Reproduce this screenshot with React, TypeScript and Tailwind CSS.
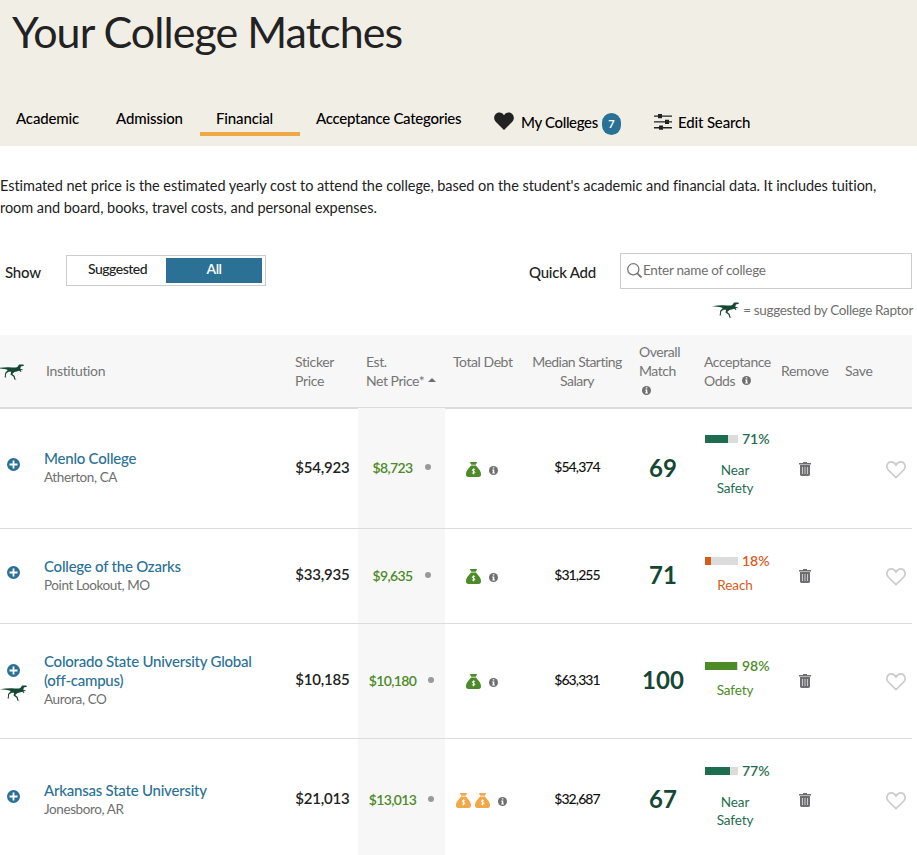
import type { ReactNode } from 'react';

type Tone = 'near' | 'reach' | 'safety';

interface College {
  name: string[];
  place: string;
  suggested: boolean;
  sticker: string;
  net: string;
  bags: number;
  salary: string;
  match: number;
  odds: number;
  label: string[];
  tone: Tone;
  height: string;
}

const colleges: College[] = [
  {
    name: ['Menlo College'],
    place: 'Atherton, CA',
    suggested: false,
    sticker: '$54,923',
    net: '$8,723',
    bags: 1,
    salary: '$54,374',
    match: 69,
    odds: 71,
    label: ['Near', 'Safety'],
    tone: 'near',
    height: 'h-[120px]',
  },
  {
    name: ['College of the Ozarks'],
    place: 'Point Lookout, MO',
    suggested: false,
    sticker: '$33,935',
    net: '$9,635',
    bags: 1,
    salary: '$31,255',
    match: 71,
    odds: 18,
    label: ['Reach'],
    tone: 'reach',
    height: 'h-[95px]',
  },
  {
    name: ['Colorado State University Global', '(off-campus)'],
    place: 'Aurora, CO',
    suggested: true,
    sticker: '$10,185',
    net: '$10,180',
    bags: 1,
    salary: '$63,331',
    match: 100,
    odds: 98,
    label: ['Safety'],
    tone: 'safety',
    height: 'h-[115px]',
  },
  {
    name: ['Arkansas State University'],
    place: 'Jonesboro, AR',
    suggested: false,
    sticker: '$21,013',
    net: '$13,013',
    bags: 2,
    salary: '$32,687',
    match: 67,
    odds: 77,
    label: ['Near', 'Safety'],
    tone: 'near',
    height: 'h-[123px]',
  },
];

const toneText: Record<Tone, string> = {
  near: 'text-[#1f6d51]',
  reach: 'text-[#d95b1a]',
  safety: 'text-[#4c8b27]',
};

const toneBar: Record<Tone, string> = {
  near: 'bg-[#1f6d51]',
  reach: 'bg-[#d95b1a]',
  safety: 'bg-[#4c8b27]',
};

function Raptor({ className = '' }: { className?: string }) {
  return (
    <svg viewBox="0 0 27 16" className={`w-[27px] h-4 shrink-0 ${className}`} fill="#154734">
      <path d="M0 4.300C4 3.600 8 3 12 3.200C15 3.300 18.500 3.900 20.300 3C21.400 2.400 21.200 1.100 22.300 .6L25.600 .4C26.700 .5 27.100 1 26.800 1.700L23.900 2.400C23.500 3.400 23.700 4.300 23.200 5.100L25.400 5.200L25.900 6.500L25 6.100L23.400 6.200L24.500 7.600L23.200 8.300L23.300 7.500L22.100 6.700C20.500 7.300 18.800 7.400 17.500 8L15.200 10.100L17.700 12L18.200 14.400L19.600 15.600L17.300 15.400L16.600 12.800L13.500 10.500L14.200 7.800L11.500 7.700L9.200 9.400L8.800 12.600L9.300 13.500L7.300 13.300L7.900 12.300L8.100 8.900L10.800 5.900C7.600 4.700 4 4.600 0 4.300Z" />
    </svg>
  );
}

function Info({ className = '' }: { className?: string }) {
  return (
    <svg viewBox="0 0 9 9" className={`w-[9px] h-[9px] shrink-0 ${className}`}>
      <circle cx="4.500" cy="4.500" r="4.500" fill="#6f6f6f" />
      <path d="M3.800 1.300H5.300V2.600H3.800ZM3.200 3.500H5.300V6.500H5.900V7.400H3.200V6.500H3.800V4.400H3.200Z" fill="#fff" />
    </svg>
  );
}

function MoneyBag({ color }: { color: string }) {
  return (
    <svg viewBox="0 0 15 15" className="w-[15px] h-[15px] shrink-0">
      <path d="M3.800 0H11.200L9.700 2.700H5.300ZM5.100 3.400H9.900C11.500 5.500 15 8.400 15 12C15 14.200 14.200 15 12.500 15H2.500C.8 15 0 14.200 0 12C0 8.400 3.500 5.500 5.100 3.400Z" fill={color} />
      <path d="M9.100 7.700C8.500 7.200 6.300 7 6.300 8.200C6.300 9.500 8.900 9 8.900 10.300C8.900 11.500 6.600 11.400 5.900 10.800M7.600 6.400V12.300" fill="none" stroke="#fff" />
    </svg>
  );
}

function Plus() {
  return (
    <svg viewBox="0 0 13 13" className="w-[13px] h-[13px]">
      <circle cx="6.500" cy="6.500" r="6.500" fill="#2a7195" />
      <path d="M6.500 2.500V10.500M2.500 6.500H10.500" stroke="#fff" strokeWidth="1.800" />
    </svg>
  );
}

function Trash() {
  return (
    <svg viewBox="0 0 12 14" className="w-3 h-[14px]" fill="#6f6f6f">
      <path d="M4 0H8V1H12V2.400H0V1H4Z" />
      <path d="M1 3H11V12.600Q11 14 9.600 14H2.400Q1 14 1 12.600Z" />
      <path d="M3.500 5V12M6 5V12M8.500 5V12" stroke="#c4c8cf" />
    </svg>
  );
}

function HeartOutline() {
  return (
    <svg viewBox="0 0 20 18" className="w-5 h-[18px]" fill="none" stroke="#ccc" strokeWidth="1.700">
      <path d="M10 16.600L2.300 9C-.6 5.800 1.300 .9 5.300 .9C7.600 .9 9.100 2.300 10 4C10.900 2.300 12.400 .9 14.700 .9C18.700 .9 20.600 5.800 17.700 9Z" />
    </svg>
  );
}

function Tab({ children, className = '' }: { children: ReactNode; className?: string }) {
  return (
    <a href="#" className={`h-[34px] pl-4 pt-[5px] ${className}`}>
      {children}
    </a>
  );
}

const columns = 'grid grid-cols-[44px_243px_71px_87px_75px_114px_58px_86px_54px_80px]';

function CollegeRow({ college, first }: { college: College; first: boolean }) {
  const bagColor = college.bags > 1 ? '#f0a848' : '#4c8b27';
  return (
    <div className={`${columns} ${college.height} border-b border-[#dcdcdc]`}>
      <div className={`flex flex-col justify-center gap-[2px] ${college.suggested ? '' : 'pb-2'}`}>
        <span className="flex h-[19px] items-center pl-[7px]">
          <Plus />
        </span>
        {college.suggested && <Raptor className="mt-[3px]" />}
      </div>
      <div className="flex flex-col justify-center pb-[2px]">
        <a href="#" className="text-[15px] leading-[19px] font-medium tracking-[-0.23px] text-[#2a7195]">
          {college.name.map((line) => (
            <span key={line} className="block whitespace-nowrap">
              {line}
            </span>
          ))}
        </a>
        <span className="text-[13.5px] leading-[18px] tracking-[-0.4px] text-[#6f6f6f]">{college.place}</span>
      </div>
      <div className="flex items-center justify-center pb-[3px] text-[15px] font-semibold tracking-[-0.2px] text-[#222]">{college.sticker}</div>
      <div className={`flex items-center justify-center gap-3 bg-[#f7f7f7] pb-[2px] text-[14px] font-semibold tracking-[-0.6px] text-[#4c8b27] ${first ? '-mt-px' : ''}`}>
        {college.net}
        <span className="size-[6px] rounded-full bg-[#999]" />
      </div>
      <div className="flex items-center justify-center pt-px pr-[2px]">
        <span className="flex gap-1">
          {Array.from({ length: college.bags }, (_, i) => (
            <MoneyBag key={i} color={bagColor} />
          ))}
        </span>
        <Info className="ml-2 mt-[2px]" />
      </div>
      <div className="flex items-center justify-center pb-1 text-[14px] font-medium tracking-[-0.9px] text-[#111]">{college.salary}</div>
      <div className="flex items-center justify-center pb-[2px] text-[24px] font-bold text-[#154734]">{college.match}</div>
      <div className={`flex flex-col justify-center pb-[6px] ${toneText[college.tone]}`}>
        <div className="flex items-center gap-1 pl-[13px]">
          <span className="h-2 w-[33px] bg-[#dcdcdc]">
            <span className={`block h-2 ${toneBar[college.tone]}`} style={{ width: `${college.odds}%` }} />
          </span>
          <span className="text-[14px] leading-[18px] font-semibold">{college.odds}%</span>
        </div>
        <div className={`text-center text-[13.5px] leading-[18px] tracking-[-0.1px] ${college.label.length > 1 ? 'pt-[13px] pb-1' : 'pt-[6px]'}`}>
          {college.label.map((line) => (
            <div key={line}>{line}</div>
          ))}
        </div>
      </div>
      <div className="flex items-center justify-center">
        <Trash />
      </div>
      <div className="flex items-center justify-end pt-[2px] pr-[6px]">
        <HeartOutline />
      </div>
    </div>
  );
}

export default function App() {
  return (
    <div className="h-[855px] overflow-hidden bg-white font-['Lato',sans-serif] text-[#222]">
      <header className="h-[146px] bg-[#f1eee6]">
        <h1 className="h-[60px] pt-[6px] pl-3 text-[43px] leading-[52px] tracking-[-0.95px]">Your College Matches</h1>
        <nav className="mt-[42px] flex text-[15px] leading-[22px] font-medium tracking-[-0.15px] text-black">
          <Tab className="w-[100px]">Academic</Tab>
          <Tab className="w-[100px]">Admission</Tab>
          <Tab className="w-[100px] border-b-4 border-[#eea846]">Financial</Tab>
          <Tab className="w-[194px] tracking-[-0.28px]">Acceptance Categories</Tab>
          <a href="#" className="flex h-10 w-[160px] items-center">
            <svg viewBox="0 0 20 18" className="mb-[2px] h-[18px] w-5" fill="#222">
              <path d="M10 18L1.500 9.500C-1.500 6 .8 .4 5.300 .4C7.600 .4 9.200 1.600 10 3.200C10.800 1.600 12.400 .4 14.700 .4C19.200 .4 21.500 6 18.500 9.500Z" />
            </svg>
            <span className="ml-[7px] tracking-[-0.35px]">My Colleges</span>
            <span className="ml-1 mt-1 flex h-[22px] w-[19px] items-center justify-center rounded-full bg-[#2a7195] text-[11px] font-bold text-white">7</span>
          </a>
          <a href="#" className="flex h-10 items-center">
            <svg viewBox="0 0 18 16" className="h-4 w-[18px]" fill="#222">
              <path d="M0 1.500H18V2.800H0ZM0 7.300H18V8.600H0ZM0 13.100H18V14.400H0ZM4 0H8V4.200H4ZM11 5.800H15V10H11ZM5 11.600H9V15.800H5Z" />
            </svg>
            <span className="ml-[6px]">Edit Search</span>
          </a>
        </nav>
      </header>

      <p className="pt-[29px] text-[14.5px] leading-[22px] tracking-[-0.05px]">
        Estimated net price is the estimated yearly cost to attend the college, based on the student's academic and financial data. It includes tuition,
        <br />
        room and board, books, travel costs, and personal expenses.
      </p>

      <div className="mt-[34px] flex h-9 w-[912px] items-start">
        <span className="w-[66px] pt-2 pl-[5px] text-[15px] leading-[22px] font-medium tracking-[-0.2px]">Show</span>
        <div className="mt-[2px] flex h-[31px] w-[200px] border border-[#ccc] p-[2px] text-[14px] leading-[21px] font-medium tracking-[-0.5px]">
          <span className="w-[97px] text-center">Suggested</span>
          <span className="h-[25px] w-24 bg-[#2a7195] text-center font-semibold text-white">All</span>
        </div>
        <span className="ml-[263px] w-[91px] pt-2 text-[15px] leading-[22px] font-medium tracking-[-0.25px]">Quick Add</span>
        <label className="flex h-9 w-[292px] items-center border border-[#ccc] pl-[6px]">
          <svg viewBox="0 0 15 15" className="mb-[2px] size-[15px]" fill="none" stroke="#777" strokeWidth="1.300">
            <circle cx="6.300" cy="6.300" r="5.600" />
            <path d="M10.300 10.300L14.500 14.500" strokeWidth="1.800" />
          </svg>
          <span className="pb-[2px] pl-px text-[13.5px] tracking-[-0.25px] text-[#6f6f6f]">Enter name of college</span>
        </label>
      </div>

      <div className="mt-[12px] flex h-[18px] w-[913px] items-center justify-end text-[13.5px] leading-[18px] tracking-[-0.33px] text-[#6f6f6f]">
        <Raptor className="mr-1" />
        = suggested by College Raptor
      </div>

      <main className="mt-4 w-[912px]">
        <div className="grid h-[74px] grid-cols-[46px_249px_71px_87px_79px_107px_65px_77px_64px_67px] items-center border-b-2 border-[#dcdcdc] bg-[#f7f7f7] pb-px text-[14px] leading-[19px] tracking-[-0.45px] text-[#757575]">
          <Raptor className="-ml-[3px] mt-[2px]" />
          <span className="tracking-[-0.35px]">Institution</span>
          <span className="tracking-[-0.35px]">
            Sticker
            <br />
            Price
          </span>
          <span className="whitespace-nowrap">
            Est.
            <br />
            Net Price*
            <svg viewBox="0 0 8 4" className="mb-[3px] ml-[4px] inline-block h-1 w-2" fill="#6f6f6f">
              <path d="M4 0L8 4H0Z" />
            </svg>
          </span>
          <span className="pb-[19px]">Total Debt</span>
          <span className="w-[90px] text-center tracking-[-0.53px] whitespace-nowrap">
            Median Starting
            <br />
            Salary
          </span>
          <span>
            Overall
            <br />
            Match
            <Info className="mt-[6px] ml-[3px] mb-[4px] block" />
          </span>
          <span>
            Acceptance
            <br />
            Odds <Info className="mb-[2px] ml-[4px] inline-block" />
          </span>
          <span className="tracking-[-0.3px]">Remove</span>
          <span className="tracking-[-0.3px]">Save</span>
        </div>
        {colleges.map((college, i) => (
          <CollegeRow key={college.place} college={college} first={i === 0} />
        ))}
      </main>
    </div>
  );
}
